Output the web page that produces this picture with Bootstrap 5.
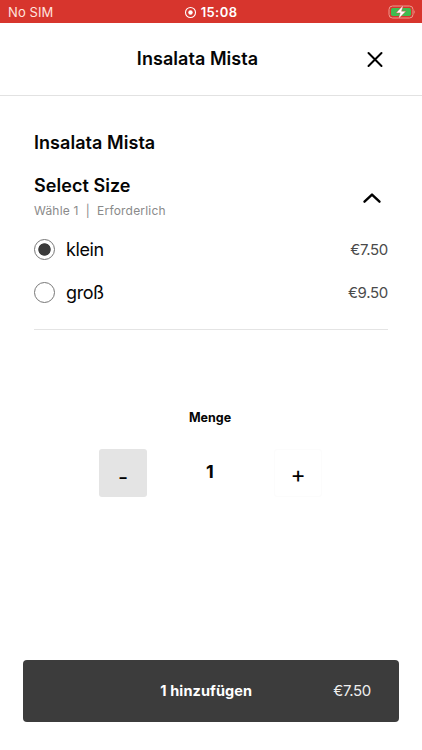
<!DOCTYPE html>
<html lang="de">
<head>
<meta charset="utf-8">
<meta name="viewport" content="width=device-width, initial-scale=1">
<title>Insalata Mista</title>
<link href="https://cdn.jsdelivr.net/npm/bootstrap@5.3.0/dist/css/bootstrap.min.css" rel="stylesheet">
<style>
body{font-family:Inter,"Liberation Sans",sans-serif;color:#050505;background:#fff}
.screen{height:750px;overflow:hidden}
.status{height:23px;background:#d7352d;color:#fff;font-size:13px;line-height:23px;padding:1px 6px 0 8px}
.status>*{flex:1 1 0}
.carrier{color:#ffe3df;letter-spacing:.1px}
.clock{font-weight:600;letter-spacing:.4px;margin-left:-3px}
.topbar{height:73px;border-bottom:1px solid #e2e2e2;padding:0 37px 0 10px}
.heading{font-size:18px;line-height:24px;font-weight:600;letter-spacing:.05px}
.close-btn{width:20px;height:20px}
.options{padding:35px 34px 0}
.group{margin-top:19px;margin-bottom:9px}
.chev{margin-right:6px;margin-top:3px}
.hint{font-size:12px;line-height:16px;color:#8a8a8a;letter-spacing:.2px;white-space:pre;margin-top:5px}
.choice{height:43px}
.choice-name{font-size:18px;letter-spacing:-.4px;margin-left:11px}
.dial{width:21px;height:21px;margin:0;border:1px solid #777;box-shadow:none!important}
.dial:checked{background:radial-gradient(circle,#3b3b3b 5.8px,#fff 6.6px)!important;border-color:#777}
.price{font-size:15px;color:#4a4a4a;letter-spacing:-.3px;padding-top:1px}
.rule{height:1px;background:#e4e4e4;margin-top:15px}
.amount-title{font-size:12.5px;line-height:18px;font-weight:700;margin-top:79px;padding-right:2px}
.stepper{margin:22px 100px 0 99px}
.step{width:48px;height:48px;border-radius:3px;font-size:22px;line-height:1;padding:7px 0 0;color:#000}
.minus,.minus:hover{background:#e4e4e4}
.plus{border:1px solid #fcfcfc;font-size:23px;padding-top:4px}
.count{font-size:18px;font-weight:700;line-height:46px;margin-right:1px}
.order{margin:auto 23px 28px;height:62px;background:#3c3c3c!important;border:0;border-radius:4px;color:#fff!important;padding:0 28px}
.order-text{font-size:14.5px;font-weight:700;letter-spacing:.1px;margin-right:81px}
.order .price{color:#eee}
</style>
</head>
<body>
<main class="screen d-flex flex-column">
<div class="status d-flex align-items-center">
<span class="carrier">No SIM</span>
<span class="clock d-flex align-items-center justify-content-center gap-1"><svg width="13" height="13" viewBox="0 0 13 13"><circle cx="6.5" cy="6.5" r="5" fill="none" stroke="#fff" stroke-width="1.1"/><circle cx="6.5" cy="6.5" r="2.2" fill="#fff"/></svg>15:08</span>
<span class="d-flex justify-content-end"><svg width="28" height="15" viewBox="0 0 28 15"><rect x="1" y="1" width="24" height="12" rx="3.5" fill="none" stroke="#ed9b8f"/><rect x="3" y="3" width="20" height="8" rx="1.8" fill="#3fbd50"/><path d="M26.2 5q1.5 2 0 4z" fill="#ed9b8f"/><path d="M15.4 0 8 7.9h4.2L10.3 14 18 6.2h-4.4z" fill="#fff" stroke="#d7352d" stroke-width=".4"/></svg></span>
</div>
<header class="topbar d-flex align-items-center justify-content-between">
<span class="close-btn"></span>
<span class="heading">Insalata Mista</span>
<button class="btn p-0 border-0 close-btn d-flex align-items-center justify-content-center" aria-label="Schließen"><svg width="20" height="20" viewBox="0 0 20 20"><path d="M3.5 4 16.5 17M16.5 4 3.5 17" stroke="#000" stroke-width="2" stroke-linecap="round"/></svg></button>
</header>
<section class="options">
<div class="heading">Insalata Mista</div>
<div class="group d-flex justify-content-between align-items-center">
<div><div class="heading">Select Size</div><div class="hint">Wähle 1  |  Erforderlich</div></div>
<svg class="chev" width="20" height="14" viewBox="0 0 20 14"><path d="M2.5 10.7 10 3.6 17.5 10.7" fill="none" stroke="#000" stroke-width="2.4" stroke-linecap="round" stroke-linejoin="round"/></svg>
</div>
<label class="choice d-flex align-items-center"><input class="form-check-input dial" type="radio" name="size" checked><span class="choice-name">klein</span><span class="price ms-auto">€7.50</span></label>
<label class="choice d-flex align-items-center"><input class="form-check-input dial" type="radio" name="size"><span class="choice-name">groß</span><span class="price ms-auto">€9.50</span></label>
<div class="rule"></div>
</section>
<div class="amount-title text-center">Menge</div>
<div class="stepper d-flex justify-content-between">
<button class="btn step minus border-0">-</button><span class="count">1</span><button class="btn step plus">+</button>
</div>
<button class="btn order d-flex align-items-center justify-content-end"><span class="order-text">1 hinzufügen</span><span class="price">€7.50</span></button>
</main>
<script src="https://cdn.jsdelivr.net/npm/bootstrap@5.3.0/dist/js/bootstrap.bundle.min.js"></script>
</body>
</html>
